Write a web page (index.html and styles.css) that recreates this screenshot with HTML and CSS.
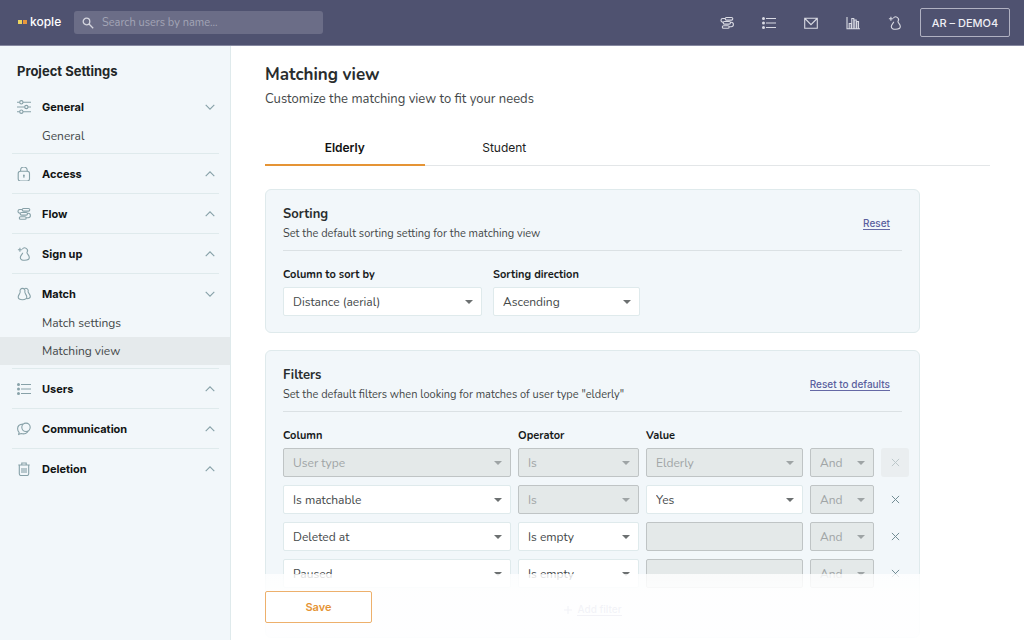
FILE: index.html
```html
<!DOCTYPE html>
<html lang="en">
<head>
<meta charset="utf-8">
<meta name="viewport" content="width=device-width, initial-scale=1">
<title>Kople – Matching view</title>
<link rel="stylesheet" href="styles.css">
</head>
<body>
<svg class="sprite" aria-hidden="true">
  <symbol id="i-flow" viewBox="0 0 14 14"><path d="M6.500 1.500h5a1.300 1.300 0 0 1 0 2.600h-5a1.300 1.300 0 0 1 0-2.600zM5 2.500H2.800a1.800 1.800 0 0 0 0 3.600h.6M4.500 5.500h4.700a1.300 1.300 0 0 1 0 2.600H4.500a1.300 1.300 0 0 1 0-2.600zM10.500 6.300h.7a2.200 2.200 0 0 1 0 4.400H9.500M3.600 9.700h4.300a1.300 1.300 0 0 1 0 2.600H3.600a1.300 1.300 0 0 1 0-2.600z"/></symbol>
  <symbol id="i-list" viewBox="0 0 14 14"><path d="M4 2.500h10M4 7h10M4 11.500h10"/><circle class="dot" cx="1.500" cy="2.500" r="1.500"/><circle class="dot" cx="1.500" cy="7" r="1.500"/><circle class="dot" cx="1.500" cy="11.500" r="1.500"/></symbol>
  <symbol id="i-mail" viewBox="0 0 14 14"><path d="M.7 2.200h12.600v10H.7zM.9 2.500 7 8.600l6.100-6.100"/></symbol>
  <symbol id="i-chart" viewBox="0 0 14 14"><path d="M1 1v11.700h13M3.200 12.500V7.500h2v5M5.800 12.500V2.500h2v10M8.200 12.500V4h2v8.500M10.800 12.500V5.500h1.700v7"/></symbol>
  <symbol id="i-pawn" viewBox="0 0 14 14"><path d="M5.300 2.200A2.700 2.700 0 0 1 10 5.300c-.4 1.500 2.300 2.800 2.300 5.300 0 2-1.700 2.700-4.500 2.700s-4.500-.7-4.500-2.700c0-2.300 2.500-3.300 2.400-4.800M2.900.8v4M.9 2.800h4"/></symbol>
  <symbol id="i-pair" viewBox="0 0 14 14"><path d="M3.200 4.900a2.500 2.500 0 1 1 4.600 0c-.1 1.700 2 2.800 2 5.200 0 1.800-1.500 2.600-4.300 2.600s-4.300-.8-4.300-2.600c0-2.400 2.100-3.500 2-5.200zM7.600 1.700a2.400 2.400 0 0 1 3.500 2.900c.1 1.700 2.200 2.700 2.200 5 0 1.500-1.200 2.100-3.500 2.200"/></symbol>
  <symbol id="i-sliders" viewBox="0 0 14 14"><path d="M0 2.300h2.700M6 2.300h8M0 7h7.700M11 7h3M0 11.700h2.700M6 11.700h8"/><circle cx="4.350" cy="2.300" r="1.650"/><circle cx="9.350" cy="7" r="1.650"/><circle cx="4.350" cy="11.700" r="1.650"/></symbol>
  <symbol id="i-lock" viewBox="0 0 14 14"><rect x="1.200" y="4.200" width="11.300" height="9.800" rx="2.200"/><path d="M3.600 4.200V3.300a3.300 3.300 0 0 1 6.600 0v.9M6.900 8.500v2.300"/><circle class="dot" cx="6.900" cy="8.500" r=".9"/></symbol>
  <symbol id="i-chat" viewBox="0 0 14 14"><circle cx="9" cy="5.300" r="4.200"/><path d="M6 2.100C2.700 2.200.6 4.100.6 6.800c0 1.500.6 2.700 1.500 3.500L1.700 12.400l2.400-.9c3.300 1 6.300-.3 7-2.600"/></symbol>
  <symbol id="i-trash" viewBox="0 0 14 14"><path d="M1.300 3h11.400M4.800 3V1h4.400v2M2.300 3v8.700c0 1.200.5 1.800 1.700 1.800h6c1.200 0 1.700-.6 1.700-1.800V3M5 6v5M7 6v5M9 6v5"/></symbol>
  <symbol id="i-down" viewBox="0 0 10 10"><path d="m.7 2.800 4.300 4.300 4.300-4.300"/></symbol>
  <symbol id="i-up" viewBox="0 0 10 10"><path d="m.7 7.200 4.300-4.300 4.300 4.300"/></symbol>
  <symbol id="i-x" viewBox="0 0 10 10"><path d="m1 1 8 8M9 1 1 9"/></symbol>
</svg>

<header class="topbar">
  <a class="logo" href="#"><span class="logo-mark"></span>kople</a>
  <label class="search">
    <svg viewBox="0 0 12 12" aria-hidden="true"><circle cx="4.500" cy="4.500" r="3.300"/><path d="m7 7 4.200 4.200"/></svg>
    <input type="search" placeholder="Search users by name..." aria-label="Search users by name">
  </label>
  <nav class="tools" aria-label="Main">
    <a href="#" aria-label="Flow"><svg><use href="#i-flow"/></svg></a>
    <a href="#" aria-label="Users"><svg><use href="#i-list"/></svg></a>
    <a href="#" aria-label="Messages"><svg><use href="#i-mail"/></svg></a>
    <a href="#" aria-label="Statistics"><svg><use href="#i-chart"/></svg></a>
    <a href="#" aria-label="Sign up"><svg><use href="#i-pawn"/></svg></a>
  </nav>
  <button class="account" type="button">AR – DEMO4</button>
</header>

<div class="shell">
  <aside class="sidebar">
    <h2>Project Settings</h2>
    <ul class="groups">
      <li><button type="button"><svg><use href="#i-sliders"/></svg>General<svg class="chev"><use href="#i-down"/></svg></button>
        <ul class="sub"><li><a href="#">General</a></li></ul></li>
      <li><button type="button"><svg><use href="#i-lock"/></svg>Access<svg class="chev"><use href="#i-up"/></svg></button></li>
      <li><button type="button"><svg><use href="#i-flow"/></svg>Flow<svg class="chev"><use href="#i-up"/></svg></button></li>
      <li><button type="button"><svg><use href="#i-pawn"/></svg>Sign up<svg class="chev"><use href="#i-up"/></svg></button></li>
      <li><button type="button"><svg><use href="#i-pair"/></svg>Match<svg class="chev"><use href="#i-down"/></svg></button>
        <ul class="sub"><li><a href="#">Match settings</a></li><li><a class="current" href="#" aria-current="page">Matching view</a></li></ul></li>
      <li><button type="button"><svg><use href="#i-list"/></svg>Users<svg class="chev"><use href="#i-up"/></svg></button></li>
      <li><button type="button"><svg><use href="#i-chat"/></svg>Communication<svg class="chev"><use href="#i-up"/></svg></button></li>
      <li><button type="button"><svg><use href="#i-trash"/></svg>Deletion<svg class="chev"><use href="#i-up"/></svg></button></li>
    </ul>
  </aside>

  <div class="workspace">
    <main class="content">
      <h1>Matching view</h1>
      <p class="lead">Customize the matching view to fit your needs</p>
      <div class="tabs" role="tablist">
        <button type="button" role="tab" aria-selected="true">Elderly</button>
        <button type="button" role="tab" aria-selected="false">Student</button>
      </div>

      <section class="card">
        <div class="card-head">
          <div><h3>Sorting</h3><p>Set the default sorting setting for the matching view</p></div>
          <a class="link" href="#">Reset</a>
        </div>
        <div class="sorting">
          <div class="field wide"><label for="sort-col">Column to sort by</label>
            <div class="select"><select id="sort-col"><option>Distance (aerial)</option></select></div></div>
          <div class="field"><label for="sort-dir">Sorting direction</label>
            <div class="select"><select id="sort-dir"><option>Ascending</option></select></div></div>
        </div>
      </section>

      <section class="card">
        <div class="card-head">
          <div><h3>Filters</h3><p>Set the default filters when looking for matches of user type "elderly"</p></div>
          <a class="link" href="#">Reset to defaults</a>
        </div>
        <div class="filters">
          <div class="filter-row labels"><label for="c1">Column</label><label for="o1">Operator</label><label for="v1">Value</label></div>
          <div class="filter-row">
            <div class="select"><select id="c1" disabled><option>User type</option></select></div>
            <div class="select"><select id="o1" disabled><option>Is</option></select></div>
            <div class="select"><select id="v1" disabled><option>Elderly</option></select></div>
            <div class="select"><select aria-label="Combine 1" disabled><option>And</option></select></div>
            <button class="remove" type="button" aria-label="Remove filter" disabled><svg><use href="#i-x"/></svg></button>
          </div>
          <div class="filter-row">
            <div class="select"><select aria-label="Column 2"><option>Is matchable</option></select></div>
            <div class="select"><select aria-label="Operator 2" disabled><option>Is</option></select></div>
            <div class="select"><select aria-label="Value 2"><option>Yes</option></select></div>
            <div class="select"><select aria-label="Combine 2" disabled><option>And</option></select></div>
            <button class="remove" type="button" aria-label="Remove filter"><svg><use href="#i-x"/></svg></button>
          </div>
          <div class="filter-row">
            <div class="select"><select aria-label="Column 3"><option>Deleted at</option></select></div>
            <div class="select"><select aria-label="Operator 3"><option>Is empty</option></select></div>
            <input type="text" aria-label="Value 3" disabled>
            <div class="select"><select aria-label="Combine 3" disabled><option>And</option></select></div>
            <button class="remove" type="button" aria-label="Remove filter"><svg><use href="#i-x"/></svg></button>
          </div>
          <div class="filter-row">
            <div class="select"><select aria-label="Column 4"><option>Paused</option></select></div>
            <div class="select"><select aria-label="Operator 4"><option>Is empty</option></select></div>
            <input type="text" aria-label="Value 4" disabled>
            <div class="select"><select aria-label="Combine 4" disabled><option>And</option></select></div>
            <button class="remove" type="button" aria-label="Remove filter"><svg><use href="#i-x"/></svg></button>
          </div>
        </div>
        <button class="add" type="button"><svg viewBox="0 0 10 10" aria-hidden="true"><path d="M5 1v8M1 5h8"/></svg><span>Add filter</span></button>
      </section>
    </main>
    <footer class="savebar"><button type="button">Save</button></footer>
  </div>
</div>
</body>
</html>
```

FILE: styles.css
```css
:root {
  --ui: Inter, "Liberation Sans", sans-serif;
  --text: Nunito, "Open Sans", "Noto Sans", sans-serif;
  --navy: #4f5270;
  --tint: #f2f7fa;
  --line: #dfeaec;
  --icon: #87a1a8;
  --orange: #e59435;
}

* { box-sizing: border-box; }

body {
  margin: 0;
  height: 100vh;
  display: flex;
  flex-direction: column;
  overflow: hidden;
  background: #fff;
  color: #444849;
  font: 11px/16px var(--text);
}

h1, h2, h3, p, ul { margin: 0; padding: 0; }
ul { list-style: none; }
a { color: inherit; text-decoration: none; }
button, input, select { font: inherit; color: inherit; margin: 0; }
button { cursor: pointer; padding: 0; border: 0; background: none; }
svg { display: block; flex: none; width: 14px; height: 14px; fill: none; stroke: currentColor; stroke-width: 1.1; overflow: visible; }
.dot { fill: currentColor; stroke: none; }
.sprite { position: absolute; width: 0; height: 0; }

/* Top bar */
.topbar {
  flex: none;
  display: flex;
  align-items: center;
  height: 46px;
  padding: 0 14px 0 18px;
  background: var(--navy);
  border-bottom: 1px solid #8688a0;
}
.logo { display: flex; align-items: center; gap: 3px; width: 56px; padding-bottom: 2px; color: #fff; font: 500 12px/16px var(--ui); }
.logo-mark { width: 9px; height: 4px; background: linear-gradient(90deg, #ecd45e 4px, transparent 4px 5px, #e8973c 5px); }
.search {
  display: flex;
  align-items: center;
  gap: 8px;
  width: 249px;
  height: 23px;
  padding: 0 8px;
  border-radius: 3px;
  background: #6b6d87;
  color: #d5d6df;
}
.search svg { width: 12px; height: 12px; stroke-width: 1.3; }
.search input { flex: 1; min-width: 0; padding: 0; border: 0; outline: 0; background: none; font-weight: 400; }
.search input::placeholder { color: #a3a5b6; opacity: 1; }
.tools { display: flex; gap: 28px; margin-left: auto; margin-right: 18px; color: #d9dae3; }
.account {
  min-width: 90px;
  height: 29px;
  padding: 0 9px;
  border: 1px solid #b0b1c2;
  border-radius: 2px;
  color: #eeeef4;
  font: 500 11px/16px var(--ui);
}

/* Layout */
.shell { flex: 1; min-height: 0; display: flex; }
.sidebar { flex: none; width: 231px; overflow: auto; background: var(--tint); border-right: 1px solid var(--line); }
.workspace { position: relative; flex: 1; min-width: 0; }
.content { height: 100%; padding: 17px 34px 2px; overflow-y: auto; scrollbar-width: none; }

/* Sidebar */
.sidebar h2 { padding: 16px 17px 7px; color: #232728; font: 700 13px/18px var(--ui); }
.groups > li > button {
  display: flex;
  align-items: center;
  gap: 11px;
  width: 100%;
  height: 39px;
  padding: 1px 15px 0 17px;
  color: #111414;
  font: 700 11px/16px var(--ui);
  text-align: left;
}
.groups button svg { color: var(--icon); }
.groups button .chev { width: 10px; height: 10px; margin-left: auto; }
.groups > li:not(:last-child)::after { content: ""; display: block; height: 1px; margin: 0 11px 0 12px; background: var(--line); }
.sub { margin-top: -4px; padding-bottom: 3px; font-size: 12px; }
.sub a { display: block; padding: 6px 42px; }
.sub .current { background: #e5eaec; }

/* Page heading and tabs */
h1 { color: #292d2e; font-size: 17px; font-weight: 700; line-height: 24px; }
.lead { padding-top: 3px; font-size: 13px; line-height: 18px; }
.tabs { display: flex; margin-top: 22px; border-bottom: 1px solid #e3e6e8; }
.tabs button { width: 22%; height: 36px; padding-top: 2px; margin-bottom: -1px; border-bottom: 2px solid transparent; color: #222; font: 400 12px/16px var(--ui); }
.tabs [aria-selected="true"] { border-color: var(--orange); color: #111; font-weight: 600; }

/* Cards */
.card {
  max-width: 655px;
  margin-top: 23px;
  padding: 15px 17px 16px;
  border: 1px solid var(--line);
  border-radius: 6px;
  background: var(--tint);
}
.card + .card { margin-top: 17px; }
.card-head { display: flex; justify-content: space-between; align-items: center; padding: 0 12px 8px 0; border-bottom: 1px solid #dbe1e4; }
.card h3 { color: #292d2e; font-size: 13px; font-weight: 700; line-height: 18px; }
.card-head p { padding-top: 3px; }
.link { border-bottom: 1px solid #6569a5; color: #5a5f9e; font: 500 10px/12px var(--ui); }
label { color: #171a1a; font-weight: 700; }
.sorting { display: flex; gap: 11px; padding-top: 16px; }
.field { display: flex; flex-direction: column; gap: 4px; width: 147px; }
.field.wide { width: 199px; }
.select { position: relative; min-width: 0; }
.select::after {
  content: "";
  position: absolute;
  top: 13px;
  right: 9px;
  border: 4px solid transparent;
  border-top-color: #6c7071;
  border-bottom: 0;
  pointer-events: none;
}
.select:has(:disabled)::after { border-top-color: #9ea4a5; }
select, .filters input { display: block; width: 100%; height: 29px; padding: 0 9px; border: 1px solid var(--line); border-radius: 2px; background: #fff; font-size: 12px; appearance: none; }
select:disabled, .filters input:disabled { border-color: #bfc4c5; background: #e4e9e9; color: #a0a5a6; opacity: 1; }

/* Filters */
.filters { display: flex; flex-direction: column; gap: 8px; margin-right: -7px; padding-top: 16px; }
.filter-row { display: grid; grid-template-columns: 228fr 121fr 157fr 64px 28px; gap: 7px; }
.filter-row.labels { margin-bottom: -4px; }
.remove { display: grid; place-items: center; border-radius: 3px; color: #718c93; }
.remove svg { width: 9px; height: 9px; }
.remove:disabled { background: #eaeef0; color: #bcc7ca; }
.add { display: flex; align-items: center; gap: 4px; margin: 15px auto 5px; color: #5a5f9e; font: 500 10px/12px var(--ui); }
.add svg { width: 10px; height: 10px; }
.add span { border-bottom: 1px solid; }

/* Save bar lies over the scrolled content */
.savebar {
  position: absolute;
  inset: auto 0 0;
  padding: 17px 34px;
  background: linear-gradient(rgba(255, 255, 255, .8), rgba(255, 255, 255, .92) 30%, rgba(255, 255, 255, .92));
}
.savebar button { width: 107px; height: 32px; border: 1px solid #edb06c; border-radius: 2px; background: #fff; color: var(--orange); font: 600 11px/16px var(--ui); }
```
